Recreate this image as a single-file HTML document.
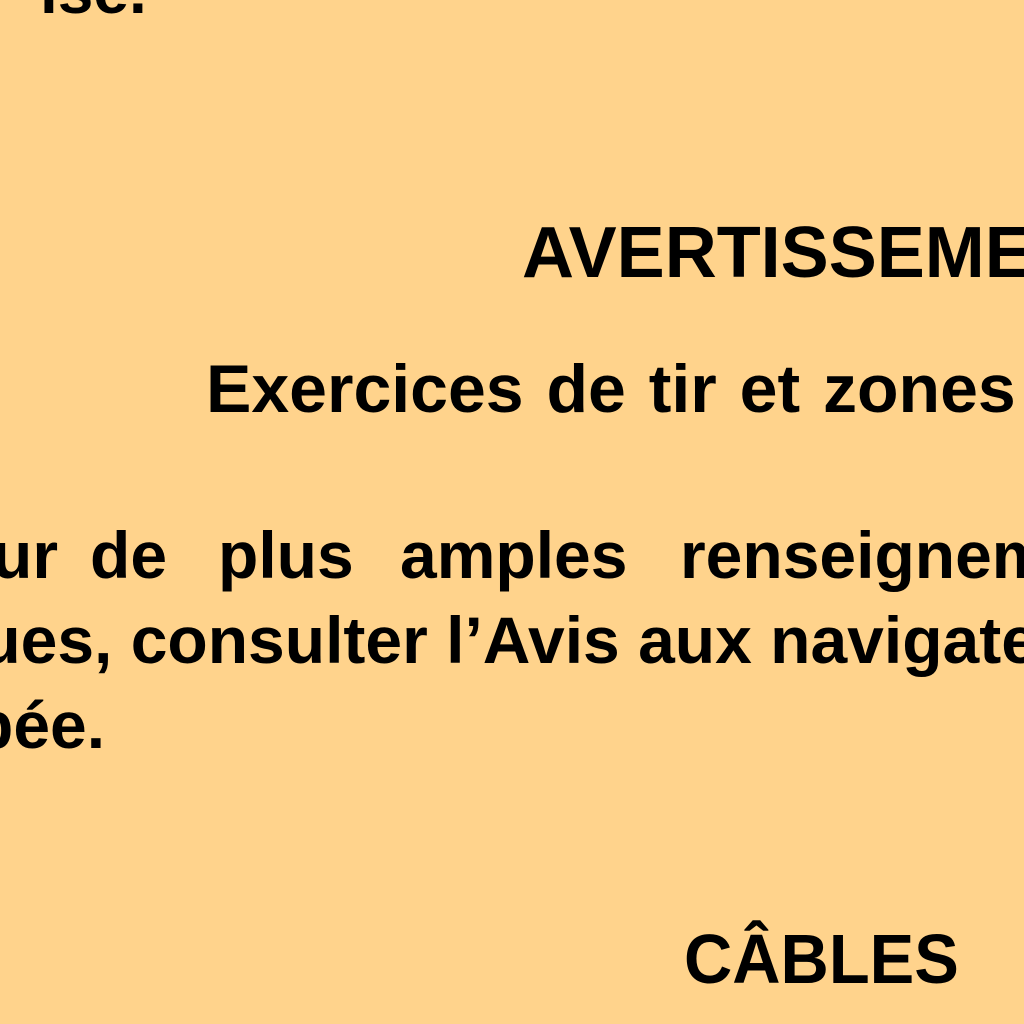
<!DOCTYPE html>
<html><head><meta charset="utf-8"><style>
html,body{margin:0;padding:0}
body{width:1024px;height:1024px;background:#FFD38C;position:relative;overflow:hidden;font-family:"Liberation Sans",sans-serif;color:#000}
.t{position:absolute;white-space:nowrap;transform-origin:0 0;line-height:1;font-weight:bold}
.b{font-size:66px}
</style></head><body>
<div class="t" style="left:40px;top:-41px;font-size:64px">ise.</div>
<div class="t" style="left:522px;top:217px;font-size:72px">AVERTISSEMENT</div>
<div class="t" style="left:206px;top:355px;font-size:68px;word-spacing:4px">Exercices de tir et zones</div>
<div class="t b" style="left:-8px;top:522px">ur</div>
<div class="t b" style="left:90px;top:522px">de</div>
<div class="t b" style="left:218px;top:522px">plus</div>
<div class="t b" style="left:400px;top:522px">amples</div>
<div class="t b" style="left:680px;top:522px">renseignements</div>
<div class="t b" style="left:-60px;top:607px">ques, consulter l’Avis aux navigateurs</div>
<div class="t b" style="left:-27px;top:692px">pée.</div>
<div class="t" style="left:684px;top:924px;font-size:70px;transform:scaleX(0.955)">CÂBLES</div>
</body></html>
